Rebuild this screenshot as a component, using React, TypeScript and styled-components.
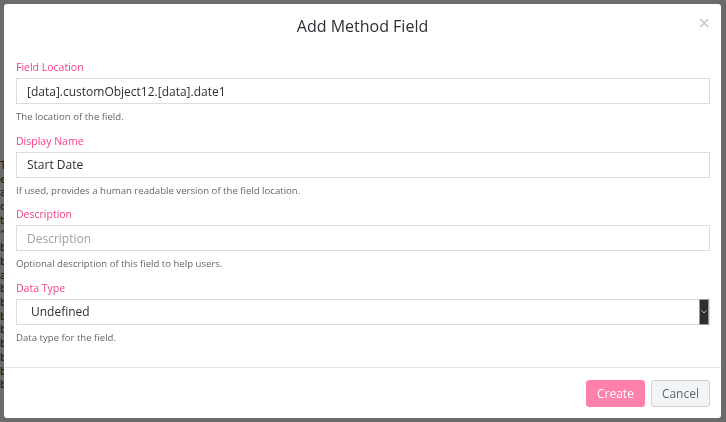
import React from "react";
import styled, { createGlobalStyle } from "styled-components";

const GlobalStyle = createGlobalStyle`
  html, body {
    margin: 0;
    padding: 0;
    width: 100%;
    height: 100%;
    overflow: hidden;
  }
  body {
    font-family: "Open Sans", "DejaVu Sans", sans-serif;
    background: #ffffff;
  }
`;

const BackPage = styled.div`
  padding: 159px 0 0 0;
  display: flex;
  flex-direction: column;
  font-family: "DejaVu Sans", sans-serif;
  font-size: 11px;
  line-height: 13.7px;
  color: #4a3a10;
`;

const Overlay = styled.div`
  position: fixed;
  inset: 0;
  background: rgba(0, 0, 0, 0.58);
  padding: 4px 5px 4px 4px;
  box-sizing: border-box;
  display: flex;
`;

const Modal = styled.div`
  flex: 1;
  background: #ffffff;
  border-radius: 3px;
  display: flex;
  flex-direction: column;
  overflow: hidden;
`;

const Header = styled.div`
  position: relative;
  height: 44px;
  display: flex;
  align-items: center;
  justify-content: center;
`;

const Title = styled.h2`
  margin: 0;
  font-size: 16px;
  font-weight: 500;
  color: #2b2f33;
`;

const Close = styled.button`
  position: absolute;
  right: 10px;
  top: 11px;
  border: none;
  background: none;
  padding: 0;
  color: #c4c4c4;
  font-size: 16px;
  line-height: 16px;
  cursor: pointer;
  font-family: "DejaVu Sans", sans-serif;
`;

const Body = styled.div`
  flex: 1;
  padding: 13px 11px 0 12px;
  display: flex;
  flex-direction: column;
`;

const Group = styled.div`
  display: flex;
  flex-direction: column;
  margin-bottom: 12.6px;
`;

const Label = styled.label`
  font-size: 10.5px;
  line-height: 12px;
  font-weight: 500;
  color: #f4408a;
  margin-bottom: 5px;
`;

const Field = styled.div<{ $placeholder?: boolean; $indent?: number }>`
  height: 26px;
  border: 1px solid #dcdcdc;
  box-sizing: border-box;
  display: flex;
  align-items: center;
  padding-left: ${(p) => p.$indent ?? 10}px;
  font-size: 12px;
  color: ${(p) => (p.$placeholder ? "#a0a0a0" : "#2b2f33")};
  position: relative;
`;

const Help = styled.div`
  font-size: 9.6px;
  line-height: 11px;
  color: #666666;
  margin-top: 7px;
`;

const SelectArrow = styled.div`
  position: absolute;
  right: 0;
  top: -1px;
  bottom: -1px;
  width: 10px;
  background: #2e2e2e;
  border: 1px solid #9a9a9a;
  box-sizing: border-box;
  display: flex;
  align-items: center;
  justify-content: center;
`;

const Footer = styled.div`
  border-top: 1px solid #e5e5e5;
  height: 50px;
  display: flex;
  align-items: center;
  justify-content: flex-end;
  gap: 6px;
  padding-right: 11px;
`;

const Button = styled.button<{ $primary?: boolean }>`
  height: 27px;
  padding: 0 10px;
  border-radius: 3px;
  font-family: inherit;
  font-size: 12px;
  cursor: pointer;
  border: 1px solid ${(p) => (p.$primary ? "#ff80a8" : "#cfd3d6")};
  background: ${(p) => (p.$primary ? "#ff80a8" : "#f3f4f5")};
  color: ${(p) => (p.$primary ? "#ffffff" : "#5a6a78")};
`;

const backLetters = ["T", "e", "a", "c", "t", "\u201c", "b", "b", "a", "b", "b", "b", "b", "b", "b", "b", "b"];

const fields = [
  { label: "Field Location", value: "[data].customObject12.[data].date1", help: "The location of the field." },
  { label: "Display Name", value: "Start Date", help: "If used, provides a human readable version of the field location." },
  { label: "Description", value: "Description", placeholder: true, help: "Optional description of this field to help users." },
];

const App: React.FC = () => {
  return (
    <>
      <GlobalStyle />
      <BackPage>
        {backLetters.map((l, i) => (
          <span key={i}>{l}</span>
        ))}
      </BackPage>
      <Overlay>
        <Modal>
          <Header>
            <Title>Add Method Field</Title>
            <Close>×</Close>
          </Header>
          <Body>
            {fields.map((f) => (
              <Group key={f.label}>
                <Label>{f.label}</Label>
                <Field $placeholder={f.placeholder}>{f.value}</Field>
                <Help>{f.help}</Help>
              </Group>
            ))}
            <Group>
              <Label>Data Type</Label>
              <Field $indent={14}>
                Undefined
                <SelectArrow>
                  <svg width="6" height="4" viewBox="0 0 6 4">
                    <path d="M0.5 0.5 L3 3 L5.5 0.5" stroke="#bbbbbb" strokeWidth="1" fill="none" />
                  </svg>
                </SelectArrow>
              </Field>
              <Help>Data type for the field.</Help>
            </Group>
          </Body>
          <Footer>
            <Button $primary>Create</Button>
            <Button>Cancel</Button>
          </Footer>
        </Modal>
      </Overlay>
    </>
  );
};

export default App;
